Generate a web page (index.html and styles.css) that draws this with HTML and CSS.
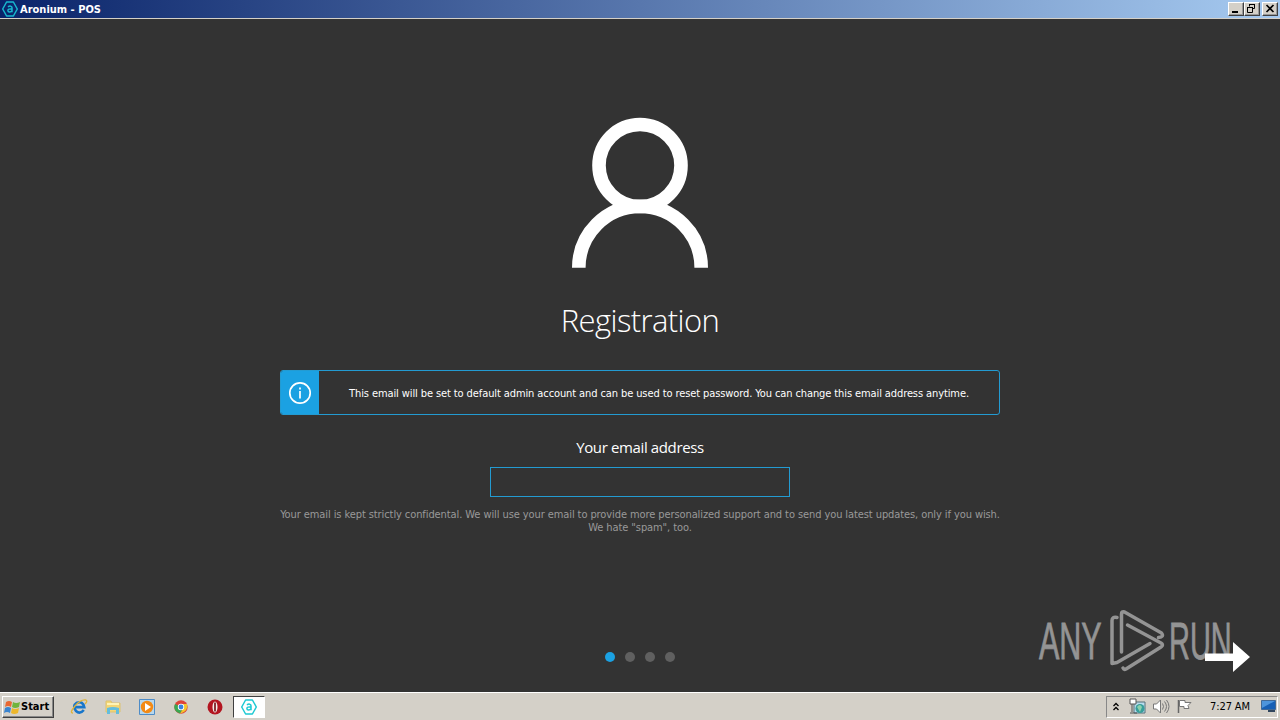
FILE: index.html
```html
<!DOCTYPE html>
<html lang="en">
<head>
<meta charset="utf-8">
<title>Aronium - POS</title>
<link rel="stylesheet" href="styles.css">
</head>
<body>
<svg class="defs" width="0" height="0"><defs>
<symbol id="aronium" viewBox="0 0 16 16"><path d="M4.600 1h6.800L15.300 8l-3.900 7H4.600L.7 8z" fill="none" stroke="currentColor" stroke-width="1.500" stroke-linejoin="round"/><path d="M6 6C7.500 4.600 10 4.900 10 6.800v4.400M10 8C7.500 7.700 5.800 8.200 5.900 9.600 6 11.400 8.900 11.500 10 9.700" fill="none" stroke="currentColor" stroke-width="1.500"/></symbol>
</defs></svg>
<div class="screen">
<header class="titlebar">
  <svg class="title-icon" width="16" height="16"><use href="#aronium"/></svg>
  <span class="title">Aronium - POS</span>
  <div class="window-buttons">
    <span class="win-btn"><svg width="14" height="12"><path d="M3 8h6v2H3z"/></svg></span>
    <span class="win-btn"><svg width="14" height="12" fill="none" stroke="#000"><path d="M4.500 1.500h5v4h-2M4.500 1.500v2M2.500 4.500h5v5h-5z"/><path d="M4 1h6v1H4zM2 4h6v1H2z" fill="#000" stroke="none"/></svg></span>
    <span class="win-btn close"><svg width="14" height="12"><path d="M3.500 2l7 7M10.500 2l-7 7" stroke="#000" stroke-width="1.700"/></svg></span>
  </div>
</header>
<main class="page">
  <svg class="user" width="138" height="152" viewBox="0 0 138 152" fill="none" stroke="#fff" stroke-width="13.600"><circle cx="69" cy="48.500" r="41"/><path d="M7.800 150.800A61.200 61.500 0 0 1 130.200 150.800"/></svg>
  <h1 class="heading">Registration</h1>
  <div class="notice">
    <div class="notice-icon"><svg width="24" height="24" fill="none" stroke="#fff"><circle cx="12" cy="12" r="10.200" stroke-width="1.700"/><path d="M12 10v7.500M12 6.500v2" stroke-width="1.700"/></svg></div>
    <p class="notice-text">This email will be set to default admin account and can be used to reset password. You can change this email address anytime.</p>
  </div>
  <label class="label" for="email">Your email address</label>
  <input class="email" id="email" type="text">
  <p class="privacy"><span class="privacy-line">Your email is kept strictly confidental. We will use your email to provide more personalized support and to send you latest updates, only if you wish.</span><span class="privacy-end">We hate "spam", too.</span></p>
  <div class="dots"><i class="dot active"></i><i class="dot"></i><i class="dot"></i><i class="dot"></i></div>
  <svg class="watermark" width="230" height="80" viewBox="0 0 230 80">
    <g class="mark-text"><text transform="translate(9 59) scale(.56 1)" textLength="112" lengthAdjust="spacingAndGlyphs">ANY</text><text transform="translate(139 59) scale(.56 1)" textLength="112" lengthAdjust="spacingAndGlyphs">RUN</text></g>
    <g fill="none" stroke="#949494" stroke-width="3.500" stroke-linejoin="round" stroke-linecap="round"><path d="M91.500 52V14q0-3 3-2l37 21q3 4-3 4.500"/><path d="M87 17.500q-5-1-5 3v43l5-1 33-19"/><path d="M97.500 25l33.500 18q3 2 0 4L96 69q-2 1-3-1"/></g>
    <path d="M175 53.500h28V42l17 15-17 15V61h-28z" fill="#fff"/>
  </svg>
</main>
<footer class="taskbar">
  <div class="start"><svg width="17" height="16"><path d="M2 3q3-2 6 0L7 8Q4 6 1 8z" fill="#e96832"/><path d="M9 3q3 2 7 0l-1 5q-4 2-7 0z" fill="#71b43c"/><path d="M1 9q3-2 6 0l-1 5q-3-2-6 0z" fill="#3a84cf"/><path d="M8 9q3 2 7 0l-1 5q-4 2-7 0z" fill="#edb72b"/></svg><span>Start</span></div>
  <nav class="launch">
    <svg width="18" height="18"><path d="M13.800 12Q10 16.500 6 13 2 8 7 4.700q6-2 7.200 4.500H5.500" fill="none" stroke="#1876ca" stroke-width="2.700"/><path d="M3 15Q-1 15 5 8T16 2q2 1-1 4" fill="none" stroke="#dfb33a" stroke-width="1.300"/></svg>
    <svg width="18" height="18"><path d="M2 3h5l1 2h8v9H2z" fill="#f4d675" stroke="#dcc171"/><path d="M3 6h12" stroke="#fff3b5" stroke-width="2"/><path d="M3 16v-6q6-2 12 0v6h-3v-4H6v4z" fill="#64bddd"/></svg>
    <svg width="18" height="18"><path d="M1.500 1.500h15v15h-15z" fill="#b7d7ed" stroke="#4e8cc7"/><circle cx="9" cy="9" r="6.200" fill="#f38a15"/><path d="M7 5l6 4-6 4z" fill="#fff"/></svg>
    <svg width="18" height="18"><circle cx="9" cy="9" r="6.700" fill="#dd4338"/><path d="M9 9L3 6a6.700 6.700 0 0 0 5 9.600l3-5z" fill="#39a852"/><path d="M9 6h6q2 7-7 9.700l3-5z" fill="#f2c62c"/><circle cx="9" cy="9" r="3.200" fill="#fff"/><circle cx="9" cy="9" r="2.400" fill="#3982de"/></svg>
    <svg width="18" height="18"><circle cx="9" cy="9" r="7.500" fill="#b31520"/><ellipse cx="9" cy="9" rx="2.500" ry="5.500" fill="#f4eee9"/><path d="M9 4.500v9" stroke="#77151b" stroke-width="1.700"/></svg>
  </nav>
  <div class="active-app"><svg width="16" height="16"><use href="#aronium"/></svg></div>
  <div class="tray">
    <svg class="chevron" width="8" height="10" fill="none" stroke="#000" stroke-width="1.300"><path d="M1.500 4L4 1.500 6.500 4M1.500 8L4 5.500 6.500 8"/></svg>
    <svg class="network" width="17" height="17"><path d="M5 4h11v11H5z" fill="#b8dced" stroke="#56707b"/><path d="M1 1h6v5H1z" fill="#fff" stroke="#555"/><path d="M3 6v8M1 15h7" stroke="#555"/><circle cx="11" cy="10.500" r="4.500" fill="#389e9b"/><path d="M8 9q3-4 5 0l-2 5z" fill="#8dd1ad"/></svg>
    <svg class="sound" width="18" height="17" fill="none" stroke="#777"><path d="M1.500 6h3l4-4v13l-4-4h-3z" fill="#fff"/><path d="M10.500 5.500q2 3 0 6M12.500 3.500q4 5 0 10M14.500 2q5 6.500 0 13"/></svg>
    <svg class="flag" width="17" height="17"><path d="M2.500 2v13" stroke="#666" stroke-width="1.500"/><path d="M3.500 2.500H9v2h6l-3 3 1 3H8v-2H3.500z" fill="#fff" stroke="#777"/></svg>
    <span class="clock">7:27 AM</span>
    <svg class="desktop" width="17" height="15"><path d="M1.500 1.500h14v9h-14z" fill="#1760b5" stroke="#426a96"/><path d="M2 2h13L2 9z" fill="#4d95dc"/><path d="M8 11h7v2H8z" fill="#31465e"/></svg>
  </div>
</footer>
</div>
</body>
</html>
```
FILE: styles.css
```css
* { box-sizing: border-box; }
body { margin: 0; font: 11px/13px "DejaVu Sans Condensed", "DejaVu Sans", sans-serif; }
svg { flex-shrink: 0; }
.defs { position: absolute; }
.screen { width: 1280px; height: 720px; display: flex; flex-direction: column; background: #333; overflow: hidden; }
.titlebar { height: 19px; flex-shrink: 0; display: flex; align-items: center; padding: 0 2px; background: linear-gradient(90deg, #0a246a, #a6caf0); border-bottom: 1px solid #d4d0c8; color: #fff; }
.title-icon { color: #18b9cf; }
.title { margin-left: 2px; font-weight: bold; white-space: nowrap; }
.window-buttons { display: flex; margin-left: auto; }
.win-btn { width: 16px; height: 14px; background: #d4d0c8; border: 1px solid; border-color: #fff #404040 #404040 #fff; box-shadow: inset -1px -1px #999; display: flex; }
.close { margin-left: 2px; }
.page { position: relative; height: 673px; display: flex; flex-direction: column; align-items: center; padding-top: 98px; color: #fff; }
.user { flex-shrink: 0; }
.heading { margin: 30px 0 0; font: 300 31px/42px "Open Sans", sans-serif; letter-spacing: -.6px; white-space: nowrap; }
.notice { width: 720px; height: 45px; margin-top: 29px; border: 1px solid #239bd2; border-radius: 3px; display: flex; overflow: hidden; }
.notice-icon { width: 38px; background: #1ba1e2; display: flex; align-items: center; justify-content: center; }
.notice-text { flex: 1; margin: 0; padding-top: 1px; display: flex; align-items: center; justify-content: center; white-space: nowrap; letter-spacing: -.1px; }
.label { margin-top: 20px; font: 15px/24px "Open Sans", sans-serif; letter-spacing: -.37px; white-space: nowrap; }
.email { width: 300px; height: 30px; margin: 8px 0 0; background: #333; color: #fff; border: 1px solid #239bd2; outline: none; }
.privacy { margin: 11px 0 0; width: 720px; display: flex; flex-direction: column; align-items: center; color: #999; }
.privacy-line, .privacy-end { white-space: nowrap; letter-spacing: -.09px; }
.dots { display: flex; gap: 10px; margin-top: 118px; }
.dot { width: 10px; height: 10px; border-radius: 50%; background: #606060; }
.active { background: #1ba1e2; }
.watermark { position: absolute; right: 20px; bottom: 12px; }
.mark-text { font: 51px "Liberation Sans", sans-serif; fill: #949494; stroke: #949494; stroke-width: .8px; }
.taskbar { height: 28px; flex-shrink: 0; display: flex; align-items: center; background: #d4d0c8; border-top: 1px solid #fff; padding: 0 2px; color: #000; }
.start { width: 52px; height: 22px; border: 1px solid; border-color: #fff #404040 #404040 #fff; box-shadow: inset -1px -1px #888; display: flex; align-items: center; padding-left: 1px; font-weight: bold; }
.launch { display: flex; gap: 16px; margin-left: 16px; }
.active-app { width: 32px; height: 22px; margin-left: 9px; display: flex; align-items: center; justify-content: center; background: #fff; border: 1px solid; border-color: #404040 #fff #fff #404040; color: #1dc9d3; }
.tray { height: 22px; margin-left: auto; width: 172px; display: flex; align-items: center; border: 1px solid; border-color: #888 #fff #fff #888; padding-left: 5px; }
.network { margin-left: 9px; }
.sound { margin-left: 6px; }
.flag { margin-left: 6px; }
.clock { margin-left: 17px; width: 41px; white-space: nowrap; letter-spacing: -.1px; }
.desktop { margin-left: 9px; }
```
